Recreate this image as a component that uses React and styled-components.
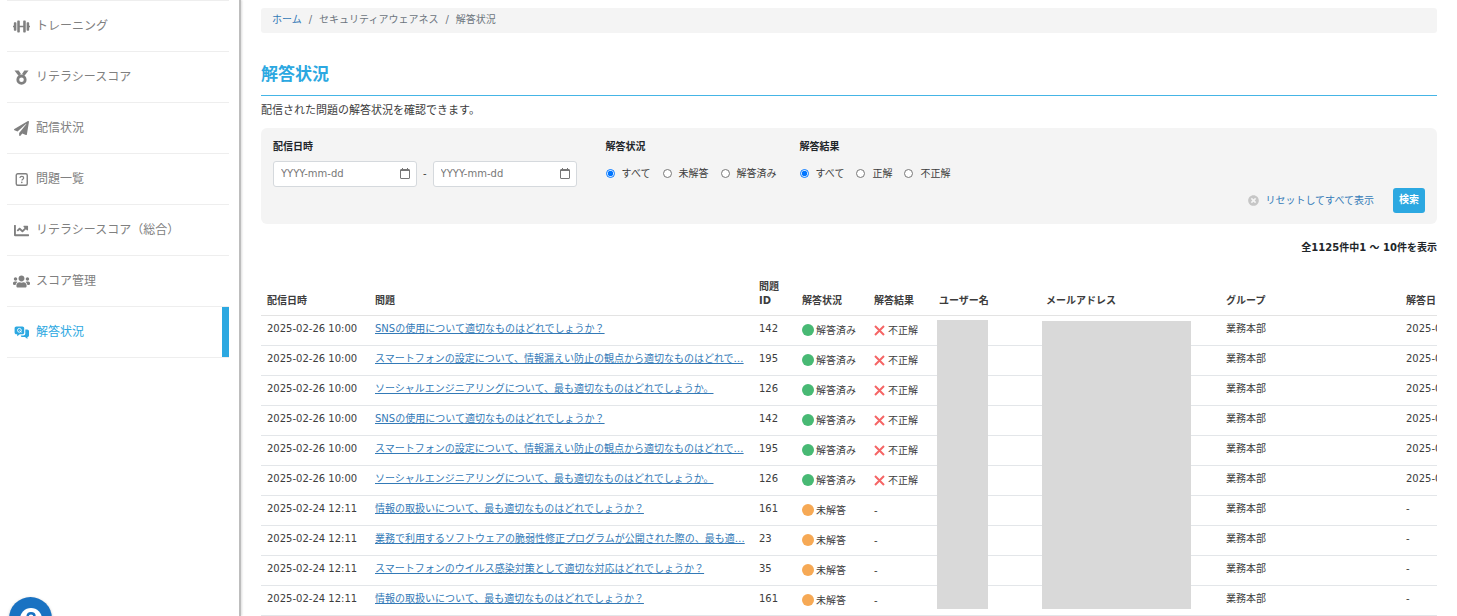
import React from "react";
import styled, { createGlobalStyle } from "styled-components";
import {
  FaDumbbell,
  FaPaperPlane,
  FaChartLine,
  FaUsers,
  FaTimesCircle,
} from "react-icons/fa";

const GlobalStyle = createGlobalStyle`
  * {
    box-sizing: border-box;
  }

  body {
    margin: 0;
    overflow: hidden;
    background-color: #fff;
    color: #3c3c3c;
    font-family: "DejaVu Sans", "Noto Sans CJK JP", sans-serif;
    font-size: 10px;
    line-height: 14px;
  }

  input,
  button {
    font: inherit;
  }
`;

const Page = styled.div`
  display: flex;
  min-height: 100vh;
`;

const Sidebar = styled.nav`
  flex: 0 0 241px;
  padding: 0 10px 0 7px;
  border-right: 2px solid #bdbdbd;
  box-shadow: 1px 0 2px #ddd;
`;

const Menu = styled.ul`
  margin: 0;
  padding: 0;
  list-style: none;
  border-top: 1px solid #eee;
`;

const MenuItem = styled.li`
  border-bottom: 1px solid #eee;
`;

const MenuLink = styled.a`
  display: flex;
  align-items: center;
  gap: 6px;
  height: 50px;
  padding-left: 6px;
  border-right: 7px solid ${({ $active }) => ($active ? "#2ca8e1" : "transparent")};
  color: ${({ $active }) => ($active ? "#2ca8e1" : "#808080")};
  font-size: 12px;
  line-height: 18px;
  text-decoration: none;

  svg {
    width: 17px;
    height: 15px;
  }
`;

const Main = styled.main`
  flex: 1;
  min-width: 0;
  padding: 8px 20px 0;
`;

const Breadcrumb = styled.ol`
  display: flex;
  margin: 0;
  padding: 5px 11px 6px;
  border-radius: 3px;
  background-color: #f4f4f4;
  color: #6c757d;
  list-style: none;

  li + li::before {
    content: "/";
    padding: 0 7px;
  }
`;

const TextLink = styled.a`
  color: #337ab7;
  text-decoration: ${({ $underline }) => ($underline ? "underline" : "none")};
`;

const Title = styled.h1`
  margin: 29px 0 0;
  padding-bottom: 8px;
  border-bottom: 1px solid #45b5e6;
  color: #2ca8e1;
  font-size: 17px;
  font-weight: 700;
  line-height: 25px;
`;

const Lead = styled.p`
  margin: 6px 0 8px;
  font-size: 11px;
  line-height: 18px;
`;

const FilterPanel = styled.form`
  display: flex;
  flex-direction: column;
  padding: 12px 12px 11px;
  border-radius: 6px;
  background-color: #f4f4f4;
`;

const FilterRow = styled.div`
  display: flex;
`;

const FilterGroup = styled.fieldset`
  min-width: 0;
  margin: 0 ${({ $space }) => $space}px 0 0;
  padding: 0;
  border: 0;
`;

const FilterLabel = styled.legend`
  padding: 0;
  color: #212529;
  font-weight: 700;
`;

const Controls = styled.div`
  display: flex;
  align-items: center;
  gap: ${({ $gap }) => $gap}px;
  height: 26px;
  margin-top: 7px;
`;

const DateField = styled.label`
  display: flex;
  align-items: center;
  width: 144px;
  height: 26px;
  padding: 0 5px 0 7px;
  border: 1px solid #d5d9dd;
  border-radius: 3px;
  background-color: #fff;

  svg {
    margin-bottom: 2px;
  }
`;

const DateInput = styled.input`
  flex: 1;
  min-width: 0;
  padding: 0;
  border: 0;
  outline: none;
  background: transparent;

  &::placeholder {
    color: #777;
    opacity: 1;
  }
`;

const RadioLabel = styled.label`
  display: flex;
  align-items: center;
  gap: 7px;

  input {
    width: 9px;
    height: 9px;
    margin: 0 0 2px;
  }
`;

const Actions = styled.div`
  display: flex;
  justify-content: flex-end;
  align-items: center;
  gap: 19px;
  margin-top: 1px;
`;

const ResetLink = styled(TextLink)`
  display: flex;
  align-items: center;
  gap: 6px;

  svg {
    color: #c6c6c6;
    font-size: 11px;
  }
`;

const SearchButton = styled.button`
  padding: 5px 6px 6px;
  border: 0;
  border-radius: 3px;
  background-color: #2ca8e1;
  color: #fff;
  font-weight: 700;
  cursor: pointer;
`;

const Count = styled.p`
  margin: 17px 0 23px;
  color: #212529;
  font-weight: 700;
  text-align: right;
`;

const TableArea = styled.div`
  position: relative;
  overflow: hidden;
`;

const Table = styled.table`
  width: 1280px;
  border-collapse: collapse;
  table-layout: fixed;
`;

const HeadCell = styled.th`
  width: ${({ $width }) => $width}px;
  padding: 2px 6px 7px;
  border-bottom: 1px solid #e3e3e3;
  font-weight: 700;
  text-align: left;
  vertical-align: bottom;
`;

const Cell = styled.td`
  height: 30px;
  padding: ${({ $low }) => ($low ? 8 : 6)}px 6px 0;
  border-bottom: 1px solid #e3e6e9;
  vertical-align: top;
  white-space: nowrap;
`;

const Status = styled.span`
  display: flex;
  align-items: center;
  gap: ${({ $gap }) => $gap}px;

  svg {
    flex: none;
    margin-bottom: 2px;
  }
`;

const Dot = styled.i`
  width: 12px;
  height: 12px;
  margin-bottom: 2px;
  border-radius: 50%;
  background-color: ${({ $done }) => ($done ? "#48b974" : "#f6a955")};
`;

const Mask = styled.div`
  position: absolute;
  top: ${({ $top }) => $top}px;
  bottom: 7px;
  left: ${({ $left }) => $left}px;
  width: ${({ $width }) => $width}px;
  background-color: #d9d9d9;
`;

const HelpButton = styled.button`
  position: fixed;
  bottom: -24px;
  left: 9px;
  width: 43px;
  height: 43px;
  padding: 0;
  border: 0;
  border-radius: 50%;
  background-color: #1972c2;
  box-shadow: 0 1px 3px #0004;
  cursor: pointer;

  svg {
    display: block;
    margin: 0 auto;
  }
`;

function MedalIcon() {
  return (
    <svg viewBox="0 0 17 15" fill="currentColor">
      <path d="M1.5 .5h4.2L8 4 5.500 5.800z" />
      <path d="M15.500 .5h-4.200L9 4l2.500 1.800z" />
      <circle cx="8.500" cy="9.700" r="3.700" fill="#fff" stroke="currentColor" strokeWidth="2.800" />
    </svg>
  );
}

function QuestionSquareIcon() {
  return (
    <svg viewBox="0 0 17 15" fill="none" stroke="currentColor">
      <rect x="3.25" y="1.75" width="11" height="11.5" rx="1.5" strokeWidth="1.4" />
      <path d="M6.9 6c.1-1.1.9-1.6 1.9-1.6s1.9.6 1.9 1.6c0 1.2-1.8 1.2-1.8 2.5" strokeWidth="1.2" />
      <circle cx="8.8" cy="10.4" r=".8" fill="currentColor" stroke="none" />
    </svg>
  );
}

function AnswersIcon() {
  return (
    <svg viewBox="0 0 17 15" fill="currentColor">
      <path d="M12.300 4.500h1.900c1 0 1.800.8 1.800 1.800v3.900c0 1-.7 1.800-1.600 1.800v2L12 12H9.500c-1 0-1.700-.6-1.700-1.600h2.500c1.200 0 2-.8 2-2z" />
      <path d="M3.400 1.500h6c1 0 1.800.8 1.800 1.800v4.200c0 1-.8 1.800-1.800 1.800H6.800l-2.600 2v-2h-.8c-1 0-1.800-.8-1.800-1.800V3.300c0-1 .8-1.800 1.800-1.800z" />
      <circle cx="6.400" cy="5.300" r="1.900" fill="none" stroke="#fff" strokeWidth=".9" />
      <path d="M6.600 5.500l2 2" stroke="#fff" strokeWidth=".9" />
    </svg>
  );
}

function CalendarIcon() {
  return (
    <svg width="12" height="13" viewBox="0 0 12 13" fill="none" stroke="#777">
      <rect x="1.500" y="2.500" width="9" height="9" rx=".5" />
      <path d="M1 3.500h10" />
      <path d="M3.500 1v2M8.500 1v2" />
    </svg>
  );
}

function CrossIcon() {
  return (
    <svg width="11" height="11" viewBox="0 0 11 11" stroke="#f56565" strokeWidth="2">
      <path d="M1 1l9 9M10 1l-9 9" />
    </svg>
  );
}

function HelpIcon() {
  return (
    <svg width="22" height="22" viewBox="0 0 22 22" fill="none">
      <circle cx="11" cy="11" r="11" fill="#fff" />
      <path
        d="M7.500 8.500c.2-2 1.600-3.200 3.500-3.200s3.500 1.200 3.500 3c0 2.300-3.300 2.300-3.300 4.900"
        stroke="#1972c2"
        strokeWidth="2.400"
      />
      <circle cx="11.200" cy="16.500" r="1.500" fill="#1972c2" />
    </svg>
  );
}

const menu = [
  { label: "トレーニング", icon: FaDumbbell },
  { label: "リテラシースコア", icon: MedalIcon },
  { label: "配信状況", icon: FaPaperPlane },
  { label: "問題一覧", icon: QuestionSquareIcon },
  { label: "リテラシースコア（総合）", icon: FaChartLine },
  { label: "スコア管理", icon: FaUsers },
  { label: "解答状況", icon: AnswersIcon, active: true },
];

const columns = [
  { label: "配信日時", width: 108 },
  { label: "問題", width: 384 },
  { label: "問題ID", width: 43 },
  { label: "解答状況", width: 72 },
  { label: "解答結果", width: 65 },
  { label: "ユーザー名", width: 107 },
  { label: "メールアドレス", width: 180 },
  { label: "グループ", width: 180 },
  { label: "解答日", width: 141 },
];

const SNS = "SNSの使用について適切なものはどれでしょうか？";
const PHONE = "スマートフォンの設定について、情報漏えい防止の観点から適切なものはどれで…";
const SOCIAL = "ソーシャルエンジニアリングについて、最も適切なものはどれでしょうか。";
const INFO = "情報の取扱いについて、最も適切なものはどれでしょうか？";
const PATCH = "業務で利用するソフトウェアの脆弱性修正プログラムが公開された際の、最も適…";
const VIRUS = "スマートフォンのウイルス感染対策として適切な対応はどれでしょうか？";

const rows = [
  { id: 142, question: SNS, done: true },
  { id: 195, question: PHONE, done: true },
  { id: 126, question: SOCIAL, done: true },
  { id: 142, question: SNS, done: true },
  { id: 195, question: PHONE, done: true },
  { id: 126, question: SOCIAL, done: true },
  { id: 161, question: INFO },
  { id: 23, question: PATCH },
  { id: 35, question: VIRUS },
  { id: 161, question: INFO },
];

function RadioGroup({ label, name, options, space }) {
  return (
    <FilterGroup $space={space}>
      <FilterLabel>{label}</FilterLabel>
      <Controls $gap={12}>
        {options.map((option, i) => (
          <RadioLabel key={option}>
            <input type="radio" name={name} value={option} defaultChecked={i === 0} />
            {option}
          </RadioLabel>
        ))}
      </Controls>
    </FilterGroup>
  );
}

function Filters() {
  return (
    <FilterPanel>
      <FilterRow>
        <FilterGroup $space={29}>
          <FilterLabel>配信日時</FilterLabel>
          <Controls $gap={6}>
            <DateField>
              <DateInput type="text" name="from" placeholder="YYYY-mm-dd" />
              <CalendarIcon />
            </DateField>
            -
            <DateField>
              <DateInput type="text" name="to" placeholder="YYYY-mm-dd" />
              <CalendarIcon />
            </DateField>
          </Controls>
        </FilterGroup>
        <RadioGroup
          label="解答状況"
          name="status"
          options={["すべて", "未解答", "解答済み"]}
          space={23}
        />
        <RadioGroup
          label="解答結果"
          name="result"
          options={["すべて", "正解", "不正解"]}
          space={0}
        />
      </FilterRow>
      <Actions>
        <ResetLink href="#reset">
          <FaTimesCircle />
          リセットしてすべて表示
        </ResetLink>
        <SearchButton type="button">検索</SearchButton>
      </Actions>
    </FilterPanel>
  );
}

function AnswerTable() {
  return (
    <TableArea>
      <Table>
        <thead>
          <tr>
            {columns.map(({ label, width }) => (
              <HeadCell key={label} $width={width}>
                {label}
              </HeadCell>
            ))}
          </tr>
        </thead>
        <tbody>
          {rows.map(({ id, question, done }, i) => (
            <tr key={i}>
              <Cell>{done ? "2025-02-26 10:00" : "2025-02-24 12:11"}</Cell>
              <Cell>
                <TextLink href="#question" $underline>
                  {question}
                </TextLink>
              </Cell>
              <Cell>{id}</Cell>
              <Cell $low>
                <Status $gap={2}>
                  <Dot $done={done} />
                  {done ? "解答済み" : "未解答"}
                </Status>
              </Cell>
              <Cell $low>
                <Status $gap={3}>
                  {done && <CrossIcon />}
                  {done ? "不正解" : "-"}
                </Status>
              </Cell>
              <Cell />
              <Cell />
              <Cell>業務本部</Cell>
              <Cell>{done ? "2025-02-26" : "-"}</Cell>
            </tr>
          ))}
        </tbody>
      </Table>
      <Mask $top={42} $left={676} $width={51} />
      <Mask $top={43} $left={781} $width={149} />
    </TableArea>
  );
}

export default function App() {
  return (
    <>
      <GlobalStyle />
      <Page>
        <Sidebar>
          <Menu>
            {menu.map(({ label, icon: Icon, active }) => (
              <MenuItem key={label}>
                <MenuLink href="#menu" $active={active}>
                  <Icon />
                  {label}
                </MenuLink>
              </MenuItem>
            ))}
          </Menu>
        </Sidebar>
        <Main>
          <Breadcrumb>
            <li>
              <TextLink href="#home">ホーム</TextLink>
            </li>
            <li>セキュリティアウェアネス</li>
            <li>解答状況</li>
          </Breadcrumb>
          <Title>解答状況</Title>
          <Lead>配信された問題の解答状況を確認できます。</Lead>
          <Filters />
          <Count>全1125件中1 ～ 10件を表示</Count>
          <AnswerTable />
        </Main>
      </Page>
      <HelpButton type="button" aria-label="ヘルプ">
        <HelpIcon />
      </HelpButton>
    </>
  );
}
